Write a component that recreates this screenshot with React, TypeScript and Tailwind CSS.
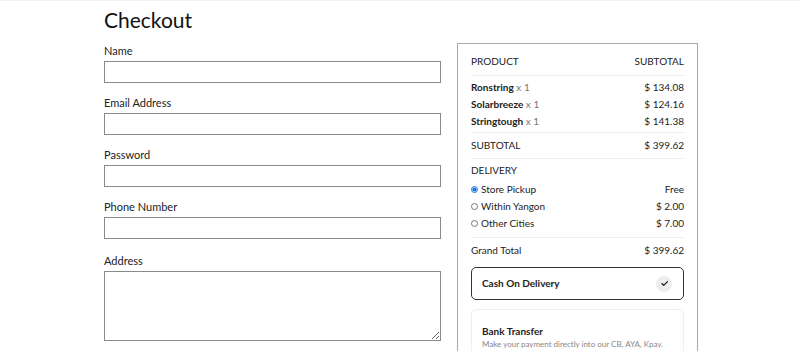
import React from "react"

const fields = ["Name", "Email Address", "Password", "Phone Number"]

const items = [
  { name: "Ronstring", price: "$ 134.08" },
  { name: "Solarbreeze", price: "$ 124.16" },
  { name: "Stringtough", price: "$ 141.38" },
]

const delivery = [
  { name: "Store Pickup", price: "Free", checked: true },
  { name: "Within Yangon", price: "$ 2.00", checked: false },
  { name: "Other Cities", price: "$ 7.00", checked: false },
]

export default function App() {
  return (
    <div className="w-[800px] h-[351px] overflow-hidden bg-white text-[#222] border-t border-[#f2f2f2] font-['Lato',sans-serif]">
      <div className="pl-[104px] pt-[5px] flex gap-4">
        <div className="w-[337px]">
          <h1 className="text-[21px] leading-[28px] text-[#111]">Checkout</h1>
          <div className="mt-[10px] flex flex-col gap-[13px]">
            {fields.map((f) => (
              <div key={f}>
                <label className="block text-[11px] leading-[13px] mb-[4px] text-[#222]">{f}</label>
                <input className="block w-full h-[22px] border border-[#8a8a8a] outline-none" type={f === "Password" ? "password" : "text"} />
              </div>
            ))}
            <div className="mt-[2px]">
              <label className="block text-[11px] leading-[13px] mb-[4px] text-[#222]">Address</label>
              <textarea className="block w-full h-[70px] border border-[#8a8a8a] outline-none resize-y" />
            </div>
          </div>
        </div>
        <div className="mt-[37px] w-[241px] h-[320px] border border-[#a8a8a8] px-[13px] pt-[8px] text-[10px]">
          <div className="flex justify-between items-center h-[24px] pb-[4px] border-b border-[#eee]">
            <span>PRODUCT</span>
            <span>SUBTOTAL</span>
          </div>
          <div className="pt-[3px] pb-[2px] border-b border-[#eee]">
            {items.map((it) => (
              <div key={it.name} className="flex justify-between items-center h-[17px]">
                <span>
                  <span className="font-bold">{it.name}</span> <span className="text-[#777]">x 1</span>
                </span>
                <span>{it.price}</span>
              </div>
            ))}
          </div>
          <div className="flex justify-between items-center h-[26px] border-b border-[#eee]">
            <span>SUBTOTAL</span>
            <span>$ 399.62</span>
          </div>
          <div className="pt-[3px] pb-[5px] border-b border-[#eee]">
            <div className="h-[17px] flex items-center mb-[2px]">DELIVERY</div>
            {delivery.map((d) => (
              <label key={d.name} className="flex justify-between items-center h-[17px]">
                <span className="flex items-center gap-[3px]">
                  <input type="radio" name="delivery" defaultChecked={d.checked} className="w-[7px] h-[7px] m-0 accent-[#1a73e8]" />
                  {d.name}
                </span>
                <span>{d.price}</span>
              </label>
            ))}
          </div>
          <div className="flex justify-between items-center h-[17px] mt-[4px]">
            <span>Grand Total</span>
            <span>$ 399.62</span>
          </div>
          <div className="mt-[8px] h-[33px] rounded-[5px] border border-[#333] flex items-center justify-between pl-[10px] pr-[11px]">
            <span className="font-bold">Cash On Delivery</span>
            <span className="w-[16px] h-[16px] rounded-full bg-[#eee] flex items-center justify-center">
              <svg width="9" height="9" viewBox="0 0 24 24" fill="none" stroke="#111" strokeWidth="3" strokeLinecap="round" strokeLinejoin="round">
                <path d="M5 12l5 5L20 7" />
              </svg>
            </span>
          </div>
          <div className="mt-[9px] h-[60px] rounded-[5px] border border-[#eee] px-[10px] pt-[15px]">
            <div className="font-bold leading-[13px]">Bank Transfer</div>
            <div className="text-[8px] leading-[11px] text-[#888] mt-[1px] whitespace-nowrap">Make your payment directly into our CB, AYA, Kpay.</div>
          </div>
        </div>
      </div>
    </div>
  )
}
